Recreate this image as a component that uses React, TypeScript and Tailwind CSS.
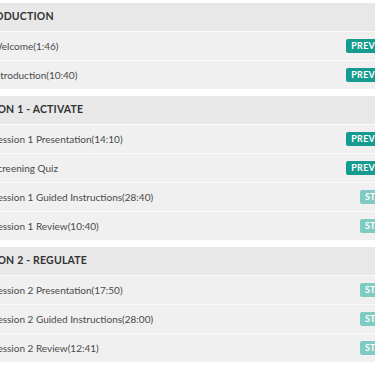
import React from "react";

type Lesson = { title: string; action: "preview" | "start" };
type Section = { title: string; lessons: Lesson[] };

const sections: Section[] = [
  {
    title: "INTRODUCTION",
    lessons: [
      { title: "Welcome(1:46)", action: "preview" },
      { title: "Introduction(10:40)", action: "preview" },
    ],
  },
  {
    title: "SESSION 1 - ACTIVATE",
    lessons: [
      { title: "Session 1 Presentation(14:10)", action: "preview" },
      { title: "Screening Quiz", action: "preview" },
      { title: "Session 1 Guided Instructions(28:40)", action: "start" },
      { title: "Session 1 Review(10:40)", action: "start" },
    ],
  },
  {
    title: "SESSION 2 - REGULATE",
    lessons: [
      { title: "Session 2 Presentation(17:50)", action: "start" },
      { title: "Session 2 Guided Instructions(28:00)", action: "start" },
      { title: "Session 2 Review(12:41)", action: "start" },
    ],
  },
];

const App = () => {
  return (
    <div className="h-[366px] w-[375px] overflow-hidden bg-white pt-[3px] font-['Lato',sans-serif]">
      <div className="ml-[-45px] flex w-[455px] flex-col gap-[7px]">
        {sections.map((section) => (
          <div key={section.title} className="flex flex-col">
            <div className="flex h-[28px] items-center bg-[#e8e8e8] pl-[15px] text-[10.5px] font-bold tracking-[0.2px] text-[#333333]">
              {section.title}
            </div>
            {section.lessons.map((lesson) => (
              <div
                key={lesson.title}
                className="flex h-[29px] items-center justify-between border-t border-[#fafafa] bg-[#f0f0f0] pl-[37px] pr-[12px] text-[10px] text-[#4a4a4a]"
              >
                <span>{lesson.title}</span>
                {lesson.action === "preview" ? (
                  <span className="flex h-[14px] items-center rounded-[2px] bg-[#169b8f] px-[5px] text-[9px] font-bold tracking-wide text-white">
                    PREVIEW
                  </span>
                ) : (
                  <span className="flex h-[14px] items-center rounded-[2px] bg-[#7fcbc4] px-[5px] text-[9px] font-bold tracking-wide text-white">
                    START
                  </span>
                )}
              </div>
            ))}
          </div>
        ))}
      </div>
    </div>
  );
};

export default App;
